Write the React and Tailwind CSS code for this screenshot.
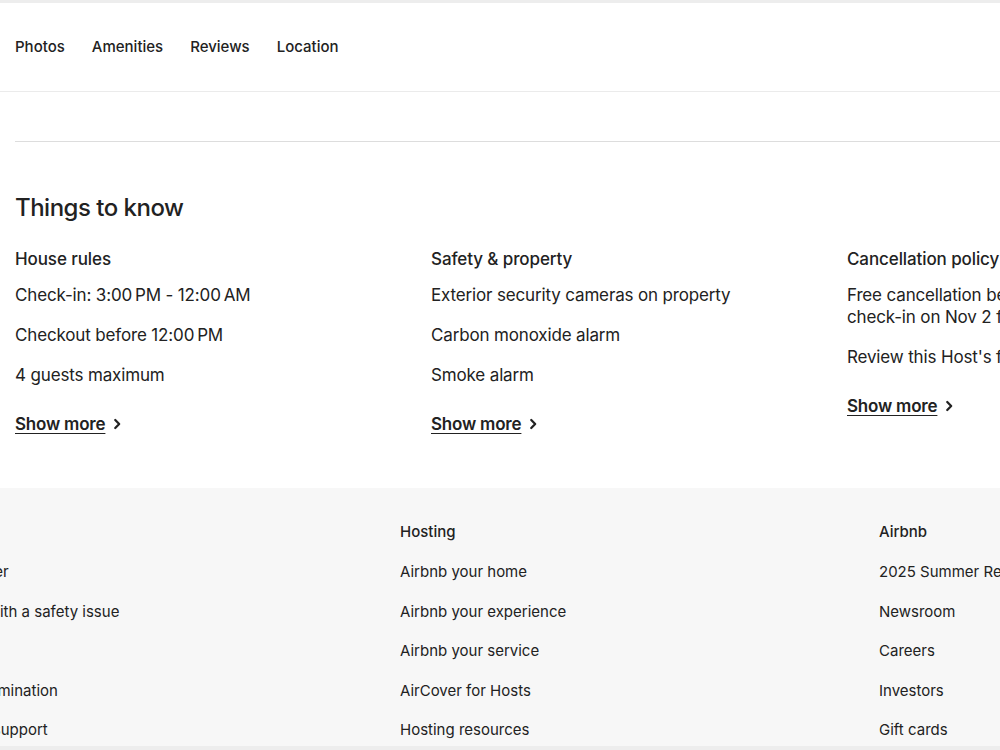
const font = { fontFamily: 'Inter, "Noto Sans", sans-serif' }

function Chevron() {
  return (
    <svg viewBox="0 0 16 16" className="w-[14px] h-[14px] ml-[5px]" fill="none" stroke="#222222" strokeWidth="2.6" strokeLinecap="round" strokeLinejoin="round">
      <path d="M6 3.5l4.5 4.5L6 12.5" />
    </svg>
  )
}

const sections = [
  {
    title: 'House rules',
    items: ['Check-in: 3:00\u202FPM - 12:00\u202FAM', 'Checkout before 12:00\u202FPM', '4 guests maximum'],
  },
  {
    title: 'Safety & property',
    items: ['Exterior security cameras on property', 'Carbon monoxide alarm', 'Smoke alarm'],
  },
  {
    title: 'Cancellation policy',
    items: [
      <>Free cancellation before Oct 31. Cancel before<br />check-in on Nov 2 for a partial refund.</>,
      "Review this Host's full policy for details.",
    ],
  },
]

const footer = [
  { title: 'Support', items: ['Help Center', 'Get help with a safety issue', 'AirCover', 'Anti-discrimination', 'Disability support'] },
  { title: 'Hosting', items: ['Airbnb your home', 'Airbnb your experience', 'Airbnb your service', 'AirCover for Hosts', 'Hosting resources'] },
  { title: 'Airbnb', items: ['2025 Summer Release', 'Newsroom', 'Careers', 'Investors', 'Gift cards'] },
]

export default function App() {
  return (
    <div style={font} className="w-[1000px] h-[750px] overflow-hidden bg-white text-[#222222] border-t-[3px] border-b-[4px] border-[#ededed] flex flex-col">
      {/* nav */}
      <div className="h-[89px] shrink-0 flex items-center gap-[27px] px-[15px] border-b border-[#ebebeb] text-[15px] font-medium">
        <span>Photos</span>
        <span>Amenities</span>
        <span>Reviews</span>
        <span>Location</span>
      </div>

      {/* things to know */}
      <div className="pl-[15px] pt-[49px] pb-[53px] shrink-0">
        <div className="border-t border-[#dddddd]" />
        <h2 className="mt-[52px] text-[24px] leading-[28px] font-medium tracking-[-0.5px] whitespace-nowrap">Things to know</h2>
        <div className="mt-[26px] grid grid-cols-[repeat(3,384px)] gap-x-8">
          {sections.map((s) => (
            <div key={s.title} className="flex flex-col">
              <h3 className="text-[17px] leading-[22px] font-medium tracking-[-0.1px] whitespace-nowrap">{s.title}</h3>
              <div className="mt-[14px] flex flex-col gap-[18px] text-[17px] leading-[22px] tracking-[-0.15px] text-[#222222]">
                {s.items.map((t, i) => (
                  <p key={i} className="whitespace-nowrap">{t}</p>
                ))}
              </div>
              <a className="mt-[27px] flex items-center text-[17px] leading-[22px] font-semibold tracking-[-0.2px] underline underline-offset-[3px] decoration-[1px]">
                Show more <Chevron />
              </a>
            </div>
          ))}
        </div>
      </div>

      {/* footer */}
      <div className="flex-1 bg-[#f7f7f7] pt-[34px] overflow-hidden">
        <div className="ml-[-76px] grid grid-cols-[452px_455px_455px] gap-x-6">
          {footer.map((c) => (
            <div key={c.title} className="flex flex-col text-[15px] leading-[20px]">
              <h4 className="font-medium whitespace-nowrap">{c.title}</h4>
              <ul className="mt-[20px] flex flex-col gap-[19.5px]">
                {c.items.map((t) => (
                  <li key={t} className="whitespace-nowrap">{t}</li>
                ))}
              </ul>
            </div>
          ))}
        </div>
      </div>
    </div>
  )
}
